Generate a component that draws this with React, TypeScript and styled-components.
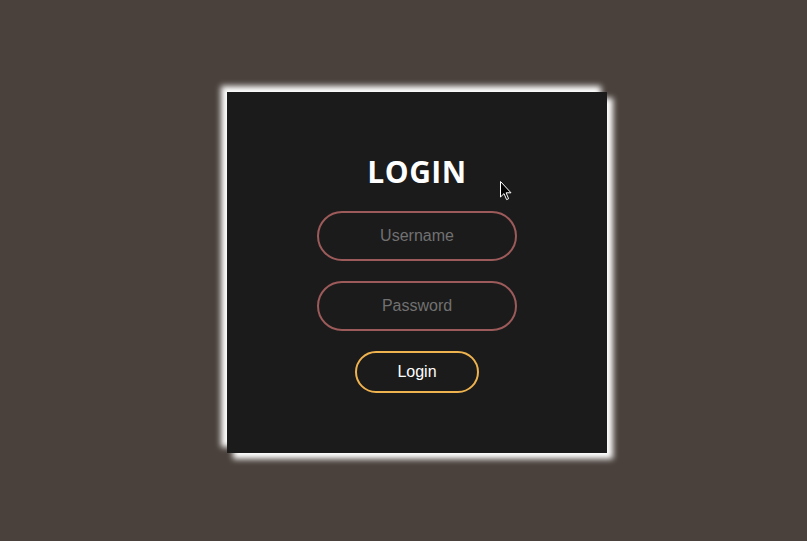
import styled, { createGlobalStyle } from "styled-components";

const GlobalStyle = createGlobalStyle`
   html, body {
      margin: 0;
      padding: 0;
      background-color: #4a413c;
      font-family: "Liberation Sans", Arial, sans-serif;
   }
`;

export default function App() {
   return (
      <>
         <GlobalStyle />
         <PageStyled>
            <CardStyled>
               <TitleStyled>LOGIN</TitleStyled>
               <FormStyled onSubmit={(e) => e.preventDefault()}>
                  <InputStyled type="text" placeholder="Username" />
                  <InputStyled type="password" placeholder="Password" />
                  <ButtonStyled type="submit">Login</ButtonStyled>
               </FormStyled>
               <CursorStyled width="12" height="20" viewBox="0 0 12 20">
                  <path
                     d="M0.5 0.5 L0.5 16 L4 12.6 L6.6 18.6 L8.6 17.7 L6.1 11.8 L11 11.8 Z"
                     fill="#000"
                     stroke="#fff"
                     strokeWidth="1"
                     strokeLinejoin="miter"
                  />
               </CursorStyled>
            </CardStyled>
         </PageStyled>
      </>
   );
}

const PageStyled = styled.div`
   width: 100%;
   height: 541px;
   display: flex;
   justify-content: center;
   padding-top: 92px;
   box-sizing: border-box;
   padding-left: 27px;
`;

const CardStyled = styled.div`
   position: relative;
   width: 380px;
   height: 361px;
   background-color: #1b1b1b;
   box-shadow: -6px -6px 6px #ffffff, 6px 6px 6px #ffffff;
   display: flex;
   flex-direction: column;
   align-items: center;
   box-sizing: border-box;
   padding-top: 62px;
`;

const TitleStyled = styled.h2`
   margin: 0;
   color: #ffffff;
   font-family: "Open Sans", "DejaVu Sans", sans-serif;
   font-weight: 700;
   font-size: 30px;
   line-height: 36px;
   letter-spacing: 0.5px;
`;

const FormStyled = styled.form`
   display: flex;
   flex-direction: column;
   align-items: center;
   margin-top: 21px;
`;

const InputStyled = styled.input`
   width: 200px;
   height: 50px;
   box-sizing: border-box;
   margin-bottom: 20px;
   border: 2px solid #9c5b5a;
   border-radius: 25px;
   background: transparent;
   color: #ffffff;
   text-align: center;
   font-family: "Liberation Sans", Arial, sans-serif;
   font-size: 16px;
   outline: none;
   &::placeholder {
      color: #717171;
   }
`;

const ButtonStyled = styled.button`
   width: 124px;
   height: 42px;
   box-sizing: border-box;
   border: 2px solid #eeb24f;
   border-radius: 21px;
   background: transparent;
   color: #ffffff;
   font-family: "Liberation Sans", Arial, sans-serif;
   font-size: 16px;
   cursor: pointer;
`;

const CursorStyled = styled.svg`
   position: absolute;
   left: 273px;
   top: 89px;
`;
